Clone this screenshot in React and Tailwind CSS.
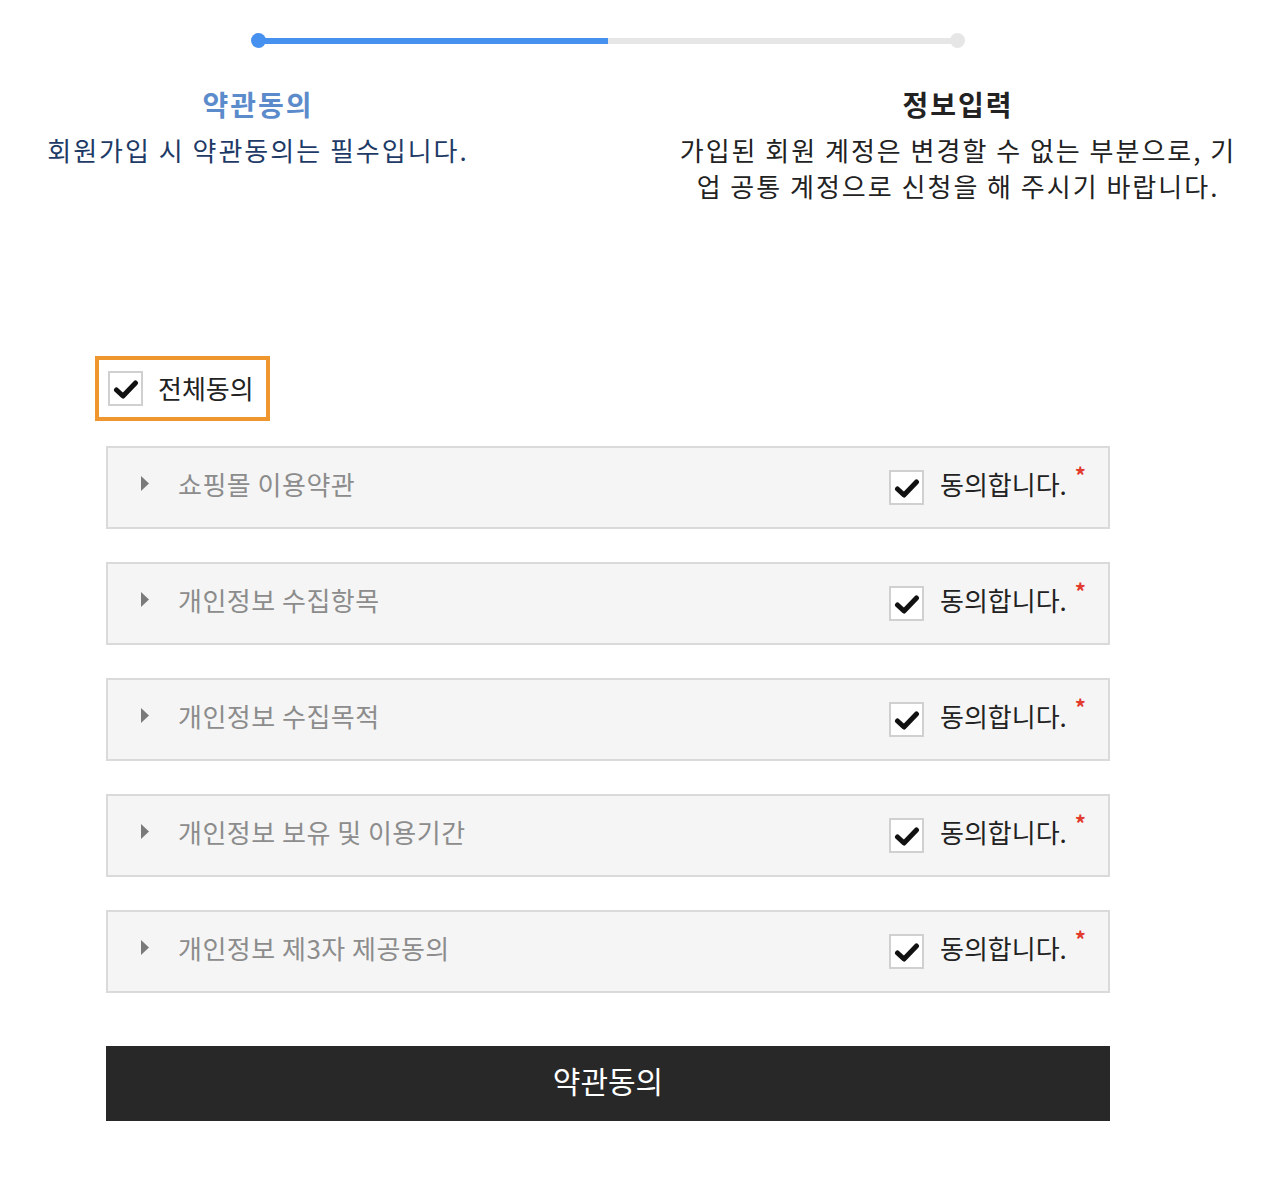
import { useState } from 'react'

const terms = [
  '쇼핑몰 이용약관',
  '개인정보 수집항목',
  '개인정보 수집목적',
  '개인정보 보유 및 이용기간',
  '개인정보 제3자 제공동의',
]

export default function App() {
  const [checked, setChecked] = useState(terms.map(() => true))
  const all = checked.every(Boolean)

  return (
    <div className="w-[1266px] min-h-[1180px] bg-white text-[#222]" style={{ fontFamily: '"Noto Sans CJK KR", "Noto Sans", sans-serif' }}>
      {/* ── 진행 단계 ── */}
      <div className="pt-[33px]">
        <div className="ml-[251px] w-[714px] h-[15px] flex items-center">
          <span className="w-[15px] h-[15px] rounded-full bg-[#4691f0] shrink-0" />
          <span className="h-[6px] w-[343px] bg-[#4691f0] -ml-px" />
          <span className="h-[6px] flex-1 bg-[#e6e6e6]" />
          <span className="w-[15px] h-[15px] rounded-full bg-[#e6e6e6] shrink-0 -ml-px" />
        </div>

        <div className="flex mt-[38px]">
          <div className="w-[516px] text-center">
            <h2 className="text-[28px] leading-[36px] font-bold tracking-[2px] text-[#5b8bcb]">약관동의</h2>
            <p className="text-[26px] leading-[36px] tracking-[2px] text-[#1e3a66] mt-[10px]">회원가입 시 약관동의는 필수입니다.</p>
          </div>
          <div className="w-[562px] ml-[161px] text-center">
            <h2 className="text-[28px] leading-[36px] font-bold tracking-[2px] text-[#222]">정보입력</h2>
            <p className="text-[26px] leading-[36px] tracking-[2px] text-[#222] mt-[10px]">가입된 회원 계정은 변경할 수 없는 부분으로, 기업 공통 계정으로 신청을 해 주시기 바랍니다.</p>
          </div>
        </div>
      </div>

      {/* ── 약관 목록 ── */}
      <div className="ml-[95px] w-[1015px] mt-[152px]">
        <label className="inline-flex items-center gap-[15px] border-[4px] border-[#f0962e] h-[65px] pl-[9px] pr-[12px] cursor-pointer">
          <Check on={all} onClick={() => setChecked(checked.map(() => !all))} />
          <span className="text-[26px] text-[#222] -mt-[3px]">전체동의</span>
        </label>

        <div className="ml-[11px] mt-[25px] flex flex-col gap-[33px]">
          {terms.map((t, i) => (
            <div key={t} className="h-[83px] border-2 border-[#dadada] bg-[#f5f5f5] flex items-center pl-[32px] pr-[22px]">
              <svg width="10" height="15" viewBox="0 0 10 15" className="shrink-0 -mt-[8px]"><path d="M1 0 L9 7.5 L1 15 Z" fill="#7a7a7a" /></svg>
              <span className="ml-[28px] text-[26px] tracking-[0.5px] text-[#8c8c8c] -mt-[9px]">{t}</span>
              <div className="ml-auto flex items-center">
                <Check on={checked[i]} onClick={() => setChecked(checked.map((c, j) => (j === i ? !c : c)))} />
                <span className="ml-[16px] text-[26px] text-[#222] -mt-[9px]">동의합니다.</span>
                <span className="ml-[8px] self-start -mt-[12px] text-[22px] text-[#e23b2e] font-bold">*</span>
              </div>
            </div>
          ))}
        </div>

        <button className="ml-[11px] mt-[53px] w-[1004px] h-[75px] pb-[6px] bg-[#282828] text-white text-[30px]">약관동의</button>
      </div>
    </div>
  )
}

function Check({ on, onClick }) {
  return (
    <span onClick={onClick} className="w-[35px] h-[35px] border-2 border-[#d0d0d0] bg-white flex items-center justify-center shrink-0 cursor-pointer">
      {on && (
        <svg width="26" height="22" viewBox="0 0 26 22"><path d="M3.5 12 L10 18 L22.5 5" fill="none" stroke="#111" strokeWidth="5" strokeLinecap="round" strokeLinejoin="round" /></svg>
      )}
    </span>
  )
}
